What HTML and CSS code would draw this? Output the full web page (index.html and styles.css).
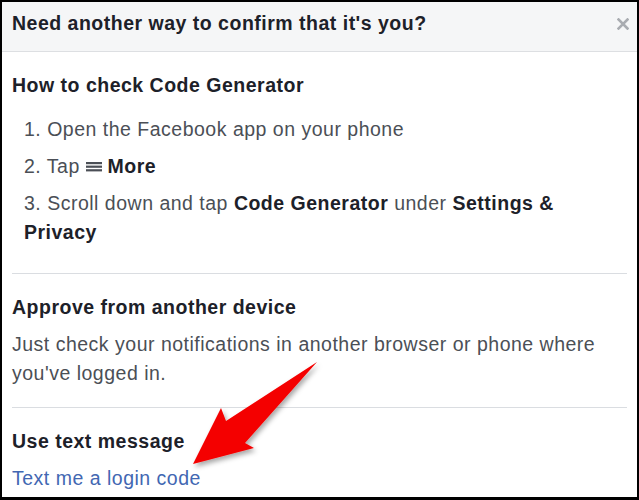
FILE: index.html
```html
<!DOCTYPE html>
<html lang="en">
<head>
  <meta charset="UTF-8">
  <title>Need another way to confirm that it's you?</title>
  <link rel="stylesheet" href="styles.css">
</head>
<body>
  <div class="dialog">
    <div class="dialog-header">
      <h1>Need another way to confirm that it's you?</h1>
      <svg class="close" width="12" height="12" viewBox="0 0 12 12">
        <path d="M1.5 1.5 L10.5 10.5 M10.5 1.5 L1.5 10.5" stroke="#a9acb1" stroke-width="2.6" stroke-linecap="square"/>
      </svg>
    </div>

    <div class="section">
      <h2>How to check Code Generator</h2>
      <ol class="steps">
        <li>1. Open the Facebook app on your phone</li>
        <li>2. Tap <svg class="menu-icon" width="16" height="10" viewBox="0 0 16 10"><rect x="0" y="0" width="16" height="2.2"/><rect x="0" y="3.6" width="16" height="2.2"/><rect x="0" y="7.2" width="16" height="2.2"/></svg> <b>More</b></li>
        <li>3. Scroll down and tap <b>Code Generator</b> under <b>Settings &amp; Privacy</b></li>
      </ol>
    </div>

    <div class="section section-approve">
      <h2>Approve from another device</h2>
      <p>Just check your notifications in another browser or phone where you've logged in.</p>
    </div>

    <div class="section">
      <h2>Use text message</h2>
      <a href="#" class="link">Text me a login code</a>
    </div>

    <!-- callout arrow drawn over the dialog -->
    <svg class="arrow" width="639" height="500" viewBox="0 0 639 500">
      <defs>
        <filter id="shadow" x="-20%" y="-20%" width="140%" height="140%">
          <feDropShadow dx="2" dy="3" stdDeviation="2.5" flood-color="#000" flood-opacity="0.35"/>
        </filter>
      </defs>
      <polygon points="193,464 221,408 226,421 317,362 245,443 254,448" fill="#f40000" filter="url(#shadow)"/>
    </svg>
  </div>
</body>
</html>
```

FILE: styles.css
```css
body {
  margin: 0;
  font-family: "Liberation Sans", Arial, sans-serif;
  background: #fff;
}

.dialog {
  position: relative;
  width: 635px;
  height: 495px;
  border: 2px solid #000;
  border-bottom-width: 3px;
  background: #fff;
  overflow: hidden;
  font-size: 19.5px;
  letter-spacing: 0.5px;
}

.dialog-header {
  display: flex;
  justify-content: space-between;
  align-items: flex-start;
  height: 49px;
  padding: 0 10px;
  background: #f5f6f7;
  border-bottom: 1px solid #dddfe2;
}

.dialog-header h1 {
  margin: 10px 0 0;
  font-size: 19.5px;
  line-height: 22px;
  font-weight: bold;
  color: #1d2129;
}

.close {
  margin-top: 16px;
  margin-right: -2px;
}

.section {
  margin: 0 10px;
  padding: 22px 0 21px;
  border-bottom: 1px solid #dadde1;
}

.section-approve {
  padding-bottom: 19px;
}

.section:last-of-type {
  border-bottom: none;
}

.section h2 {
  margin: 0 0 12px;
  font-size: 19.5px;
  line-height: 22px;
  font-weight: bold;
  color: #1d2129;
}

.steps {
  list-style: none;
  margin: 19px 0 0;
  padding: 0 40px 0 12px;
}

.steps li {
  line-height: 29px;
  color: #4b4f56;
  margin-bottom: 8px;
}

.steps li:last-child {
  margin-bottom: 5px;
}

.steps b {
  color: #1d2129;
}

.menu-icon {
  fill: #4b4f56;
  vertical-align: 1px;
}

.section p {
  margin: 0;
  line-height: 29px;
  color: #4b4f56;
}

.link {
  line-height: 29px;
  color: #4267b2;
  text-decoration: none;
}

.arrow {
  position: absolute;
  top: -2px;
  left: -2px;
  pointer-events: none;
}
```
